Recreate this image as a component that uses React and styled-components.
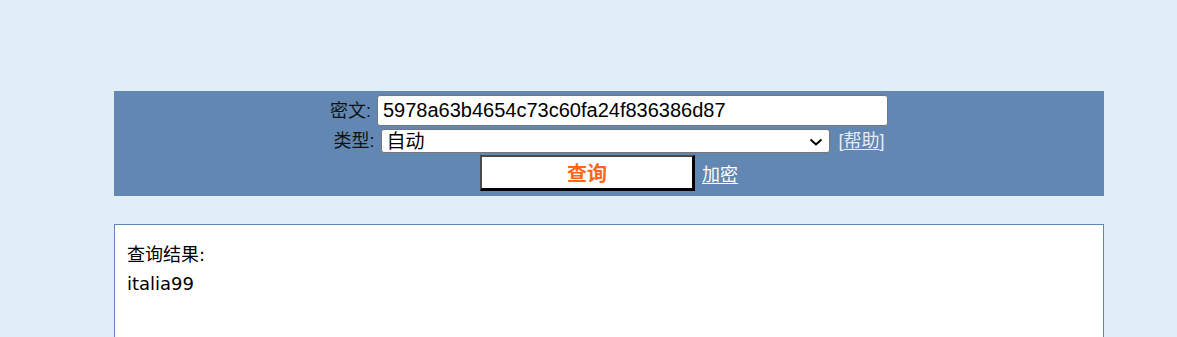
import { createGlobalStyle, styled } from "styled-components";

const GlobalStyle = createGlobalStyle`
  body {
    margin: 0;
    background-color: #e1eef7;
    font-family: "Liberation Sans", "Noto Sans CJK SC", sans-serif;
  }
`;

const Page = styled.div`
  display: flex;
  flex-direction: column;
  align-items: flex-start;
  padding: 91px 0 0 114px;
  gap: 28px;
`;

const Panel = styled.form`
  width: 990px;
  box-sizing: border-box;
  background-color: #6187b2;
  padding: 4px 0 5px;
  display: flex;
  flex-direction: column;
  align-items: center;
  gap: 2px;
`;

const Row = styled.div`
  display: flex;
  align-items: center;
  justify-content: center;
  height: ${(props) => props.h}px;
  margin-top: ${(props) => props.mt || 0}px;
`;

const Label = styled.label`
  font-family: "Liberation Sans", "Noto Sans CJK SC", sans-serif;
  font-size: 18px;
  color: #111;
  margin-right: 6px;
  line-height: 1;
`;

const TextInput = styled.input`
  box-sizing: border-box;
  width: 511px;
  height: 31px;
  border: 1px solid #767676;
  border-radius: 3px;
  padding: 0 5px;
  font-family: "Liberation Sans", sans-serif;
  font-size: 20px;
  color: #000;
  background: #fff;
  outline: none;
`;

const SelectWrap = styled.span`
  position: relative;
  display: inline-flex;
  margin-left: 1px;
`;

const Select = styled.select`
  box-sizing: border-box;
  width: 449px;
  height: 24px;
  border: 1px solid #767676;
  border-radius: 3px;
  padding: 0 4px;
  appearance: none;
  font-family: "Liberation Sans", "Noto Sans CJK SC", sans-serif;
  font-size: 19px;
  color: #000;
  background: #fff;
`;

const Chevron = styled.svg`
  position: absolute;
  right: 7px;
  top: 9px;
  width: 14px;
  height: 8px;
  pointer-events: none;
`;

const Help = styled.span`
  font-family: "Liberation Sans", "Noto Sans CJK SC", sans-serif;
  font-size: 18px;
  color: #e3ecf5;
  margin-left: 8px;
  line-height: 1;
`;

const Link = styled.a`
  color: ${(props) => props.color || "#fff"};
  text-decoration: underline;
  text-underline-offset: 2px;
  cursor: pointer;
  font-family: "Liberation Sans", "Noto Sans CJK SC", sans-serif;
  font-size: 18px;
`;

const SubmitButton = styled.button`
  box-sizing: border-box;
  width: 215px;
  height: 36px;
  background: #fff;
  border-style: solid;
  border-width: 2px 3px 3px 2px;
  border-color: #4a4a4a #000 #000 #4a4a4a;
  font-family: "Liberation Sans", "Noto Sans CJK SC", sans-serif;
  font-size: 20px;
  font-weight: bold;
  color: #ff661a;
  padding: 0;
  margin-right: 7px;
  cursor: pointer;
`;

const ResultBox = styled.div`
  width: 990px;
  min-height: 200px;
  box-sizing: border-box;
  background: #fff;
  border: 1px solid #5b87b9;
  padding: 15px 12px;
  font-family: "DejaVu Sans", "Noto Sans CJK SC", sans-serif;
  font-size: 18px;
  color: #000;
  line-height: 29px;
`;

const ResultLine = styled.div``;

export default function App() {
  return (
    <>
      <GlobalStyle />
      <Page>
        <Panel onSubmit={(e) => e.preventDefault()}>
          <Row h={31}>
            <Label>密文:</Label>
            <TextInput defaultValue="5978a63b4654c73c60fa24f836386d87" />
          </Row>
          <Row h={24} mt={1}>
            <Label>类型:</Label>
            <SelectWrap>
              <Select defaultValue="auto">
                <option value="auto">自动</option>
                <option value="md5">md5</option>
              </Select>
              <Chevron viewBox="0 0 14 8">
                <path d="M1.5 1.5 L7 6.5 L12.5 1.5" fill="none" stroke="#000" strokeWidth="2" />
              </Chevron>
            </SelectWrap>
            <Help>
              [<Link color="#e3ecf5">帮助</Link>]
            </Help>
          </Row>
          <Row h={36}>
            <SubmitButton type="submit">查询</SubmitButton>
            <Link>加密</Link>
          </Row>
        </Panel>
        <ResultBox>
          <ResultLine>查询结果:</ResultLine>
          <ResultLine>italia99</ResultLine>
        </ResultBox>
      </Page>
    </>
  );
}
